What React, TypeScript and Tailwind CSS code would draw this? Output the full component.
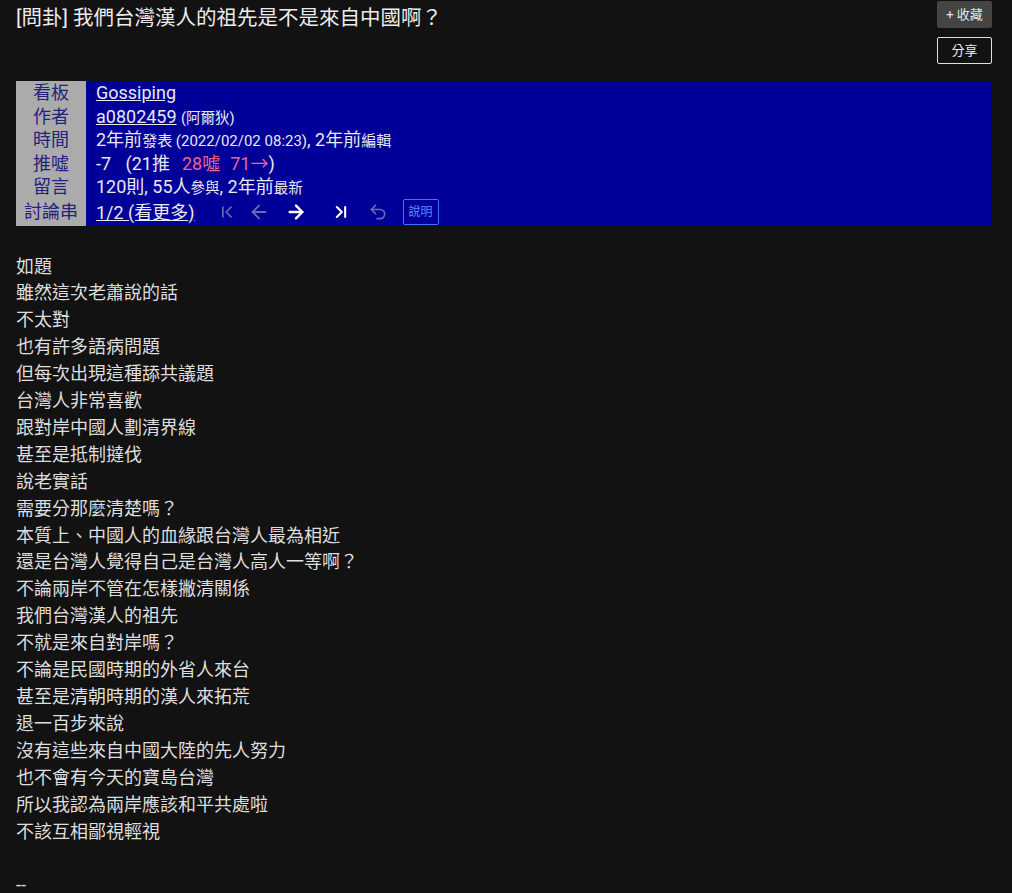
import { ChevronFirst, ArrowLeft, ArrowRight, ChevronLast, Undo2 } from "lucide-react";

const font = { fontFamily: "Roboto, 'Noto Sans CJK TC', sans-serif" };

const lines = [
  "如題",
  "雖然這次老蕭說的話",
  "不太對",
  "也有許多語病問題",
  "但每次出現這種舔共議題",
  "台灣人非常喜歡",
  "跟對岸中國人劃清界線",
  "甚至是抵制撻伐",
  "說老實話",
  "需要分那麼清楚嗎？",
  "本質上、中國人的血緣跟台灣人最為相近",
  "還是台灣人覺得自己是台灣人高人一等啊？",
  "不論兩岸不管在怎樣撇清關係",
  "我們台灣漢人的祖先",
  "不就是來自對岸嗎？",
  "不論是民國時期的外省人來台",
  "甚至是清朝時期的漢人來拓荒",
  "退一百步來說",
  "沒有這些來自中國大陸的先人努力",
  "也不會有今天的寶島台灣",
  "所以我認為兩岸應該和平共處啦",
  "不該互相鄙視輕視",
];

function Label({ children }: { children: React.ReactNode }) {
  return (
    <div className="bg-[#ababab] text-[#23237a] text-[18px] h-[23.5px] leading-[23.5px] text-center">
      {children}
    </div>
  );
}

function Value({ children }: { children: React.ReactNode }) {
  return (
    <div className="bg-[#000099] text-[#e8e8ee] text-[18px] h-[23.5px] leading-[23.5px] pl-[10px] whitespace-nowrap">
      {children}
    </div>
  );
}

export default function App() {
  return (
    <div className="min-h-screen bg-[#121212] text-[#e0e0e0]" style={font}>
      <div className="pl-4 pr-5">
        <div className="flex justify-between items-start">
          <h1 className="text-[20.5px] leading-[28px] pt-[4px] text-[#ececec] font-normal">
            [問卦] 我們台灣漢人的祖先是不是來自中國啊？
          </h1>
          <div className="flex flex-col gap-[9px] pt-[1px]">
            <button className="w-[55px] h-[27px] bg-[#444444] text-[#e6e6e6] text-[13px] rounded-[2px]">
              + 收藏
            </button>
            <button className="w-[55px] h-[27px] border border-[#e0e0e0] text-[#eeeeee] text-[13px] rounded-[2px]">
              分享
            </button>
          </div>
        </div>

        <div className="mt-[17px] grid grid-cols-[70px_1fr]">
          <Label>看板</Label>
          <Value>
            <span className="underline">Gossiping</span>
          </Value>
          <Label>作者</Label>
          <Value>
            <span className="underline">a0802459</span>{" "}
            <span className="text-[14.5px] leading-none">(阿爾狄)</span>
          </Value>
          <Label>時間</Label>
          <Value>
            2年前<span className="text-[15px] leading-none">發表 (2022/02/02 08:23)</span>, 2年前
            <span className="text-[15px] leading-none">編輯</span>
          </Value>
          <Label>推噓</Label>
          <Value>
            -7 <span className="ml-[10px]">(21推</span>
            <span className="ml-[12px] text-[#f0628e]">28噓</span>
            <span className="ml-[10px] text-[#f0628e]">71→</span>)
          </Value>
          <Label>留言</Label>
          <Value>
            120則, 55人<span className="text-[14.5px] leading-none">參與</span>, 2年前
            <span className="text-[14.5px] leading-none">最新</span>
          </Value>
          <div className="bg-[#ababab] text-[#23237a] text-[18px] h-[27px] leading-[25px] text-center">
            討論串
          </div>
          <div className="bg-[#000099] text-[#e8e8ee] text-[18px] h-[27px] pl-[10px] flex items-center">
            <span className="underline">1/2 (看更多)</span>
            <div className="flex items-center ml-[22px]">
              <ChevronFirst size={20} strokeWidth={2} className="text-[#6b6bb0]" />
              <ArrowLeft size={22} strokeWidth={2} className="text-[#6b6bb0] ml-[11px]" />
              <ArrowRight size={22} strokeWidth={2.5} className="text-white ml-[15px]" />
              <ChevronLast size={20} strokeWidth={2.5} className="text-white ml-[24px]" />
              <Undo2 size={20} strokeWidth={2} className="text-[#6b6bb0] ml-[17px]" />
            </div>
            <span className="ml-[15px] border border-[#3f6fff] text-[#5a8cff] text-[12px] rounded-[2px] px-[5px] h-[26px] leading-[24px]">
              說明
            </span>
          </div>
        </div>

        <div className="mt-[28px] text-[18px] leading-[26.9px] text-[#dedede]">
          {lines.map((line, i) => (
            <div key={i}>{line}</div>
          ))}
          <div>&nbsp;</div>
          <div>--</div>
        </div>
      </div>
    </div>
  );
}
